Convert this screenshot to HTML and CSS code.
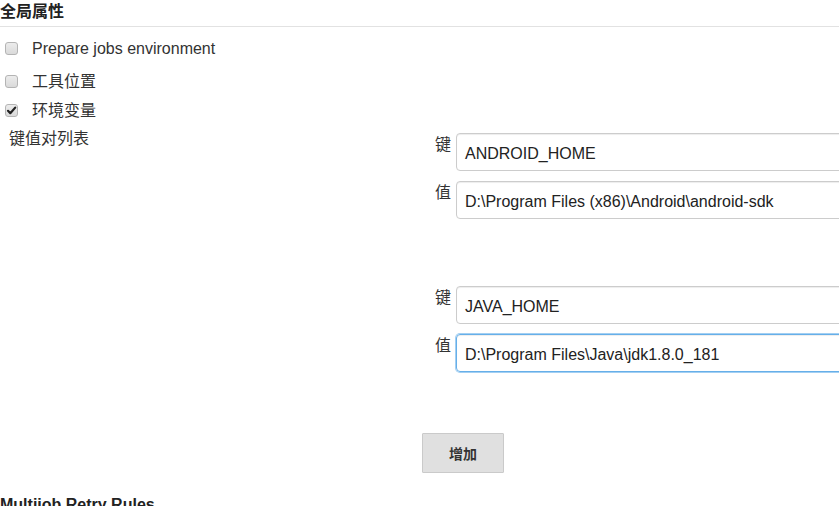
FILE: index.html
```html
<!DOCTYPE html>
<html lang="zh">
<head>
<meta charset="utf-8">
<link rel="stylesheet" href="styles.css">
</head>
<body>
<div class="page">
  <div class="section-title">全局属性</div>

  <label class="check-row row1">
    <span class="box"></span>
    <span class="check-text">Prepare jobs environment</span>
  </label>
  <label class="check-row row2">
    <span class="box"></span>
    <span class="check-text">工具位置</span>
  </label>
  <label class="check-row row3">
    <span class="box checked"><svg viewBox="0 0 13 13" width="13" height="13"><path d="M3 6.8 L5.3 9.2 L10.2 3.6" fill="none" stroke="#222" stroke-width="2.2" stroke-linecap="round" stroke-linejoin="round"/></svg></span>
    <span class="check-text">环境变量</span>
  </label>

  <div class="kv">
    <div class="kv-label">键值对列表</div>
    <div class="kv-body">
      <div class="kv-group">
        <div class="kv-row">
          <span class="field-label">键</span>
          <div class="input">ANDROID_HOME</div>
        </div>
        <div class="kv-row">
          <span class="field-label">值</span>
          <div class="input">D:\Program Files (x86)\Android\android-sdk</div>
        </div>
      </div>
      <div class="kv-group second">
        <div class="kv-row">
          <span class="field-label">键</span>
          <div class="input">JAVA_HOME</div>
        </div>
        <div class="kv-row">
          <span class="field-label">值</span>
          <div class="input focused">D:\Program Files\Java\jdk1.8.0_181</div>
        </div>
      </div>
      <button class="add-btn">增加</button>
    </div>
  </div>

  <div class="next-title">Multijob Retry Rules</div>
</div>
</body>
</html>
```

FILE: styles.css
```css
html, body {
  margin: 0;
  padding: 0;
  background: #fff;
  overflow: hidden;
}
body {
  width: 839px;
  height: 506px;
  font-family: "Liberation Sans", Arial, "Noto Sans CJK SC", sans-serif;
  font-size: 16px;
  color: #333;
}
.page {
  width: 900px;
}
.section-title {
  font-weight: bold;
  font-size: 16px;
  line-height: 24px;
  height: 26px;
  border-bottom: 1px solid #e2e2e2;
  color: #222;
}
.check-row {
  display: flex;
  align-items: center;
  height: 20px;
  line-height: 20px;
}
.row1 { margin-top: 12px; }
.row2 { margin-top: 13px; }
.row3 { margin-top: 9px; }
.box {
  width: 13px;
  height: 13px;
  box-sizing: border-box;
  margin-left: 5px;
  margin-right: 14px;
  margin-top: -1px;
  border: 1px solid #b4b4b4;
  border-radius: 3px;
  background: linear-gradient(#ececec, #dadada);
  position: relative;
}
.box svg {
  position: absolute;
  left: -1px;
  top: -1px;
}
.check-text {
  color: #333;
}
.kv {
  display: flex;
  margin-top: 8px;
}
.kv-label {
  width: 413px;
  padding-left: 9px;
  line-height: 20px;
  height: 20px;
}
.kv-body {
  flex: 1;
  padding-top: 4px;
}
.kv-group {
  display: flex;
  flex-direction: column;
  gap: 10px;
}
.kv-group.second {
  margin-top: 67px;
}
.kv-row {
  display: flex;
  align-items: flex-start;
}
.field-label {
  width: 21px;
  padding-left: 13px;
  padding-top: 2px;
  line-height: 20px;
  font-size: 16px;
}
.input {
  flex: 1;
  height: 38px;
  box-sizing: border-box;
  border: 1px solid #ccc;
  border-radius: 4px;
  box-shadow: inset 0 1px 1px rgba(0,0,0,0.075);
  padding-left: 8px;
  padding-top: 4px;
  line-height: 32px;
  font-size: 16px;
  color: #222;
  white-space: nowrap;
}
.input.focused {
  border-color: #66afe9;
  box-shadow: inset 0 1px 1px rgba(0,0,0,0.075), 0 0 0 1px rgba(102,175,233,0.6);
}
.add-btn {
  display: block;
  margin-top: 61px;
  width: 82px;
  height: 40px;
  box-sizing: border-box;
  background: #e0e0e0;
  border: 1px solid #cacaca;
  border-radius: 1px;
  font-family: "Liberation Sans", Arial, "Noto Sans CJK SC", sans-serif;
  font-size: 14px;
  font-weight: bold;
  color: #333;
  padding: 0;
}
.next-title {
  margin-top: 22px;
  font-weight: bold;
  font-size: 16px;
  line-height: 20px;
  color: #222;
}
```
